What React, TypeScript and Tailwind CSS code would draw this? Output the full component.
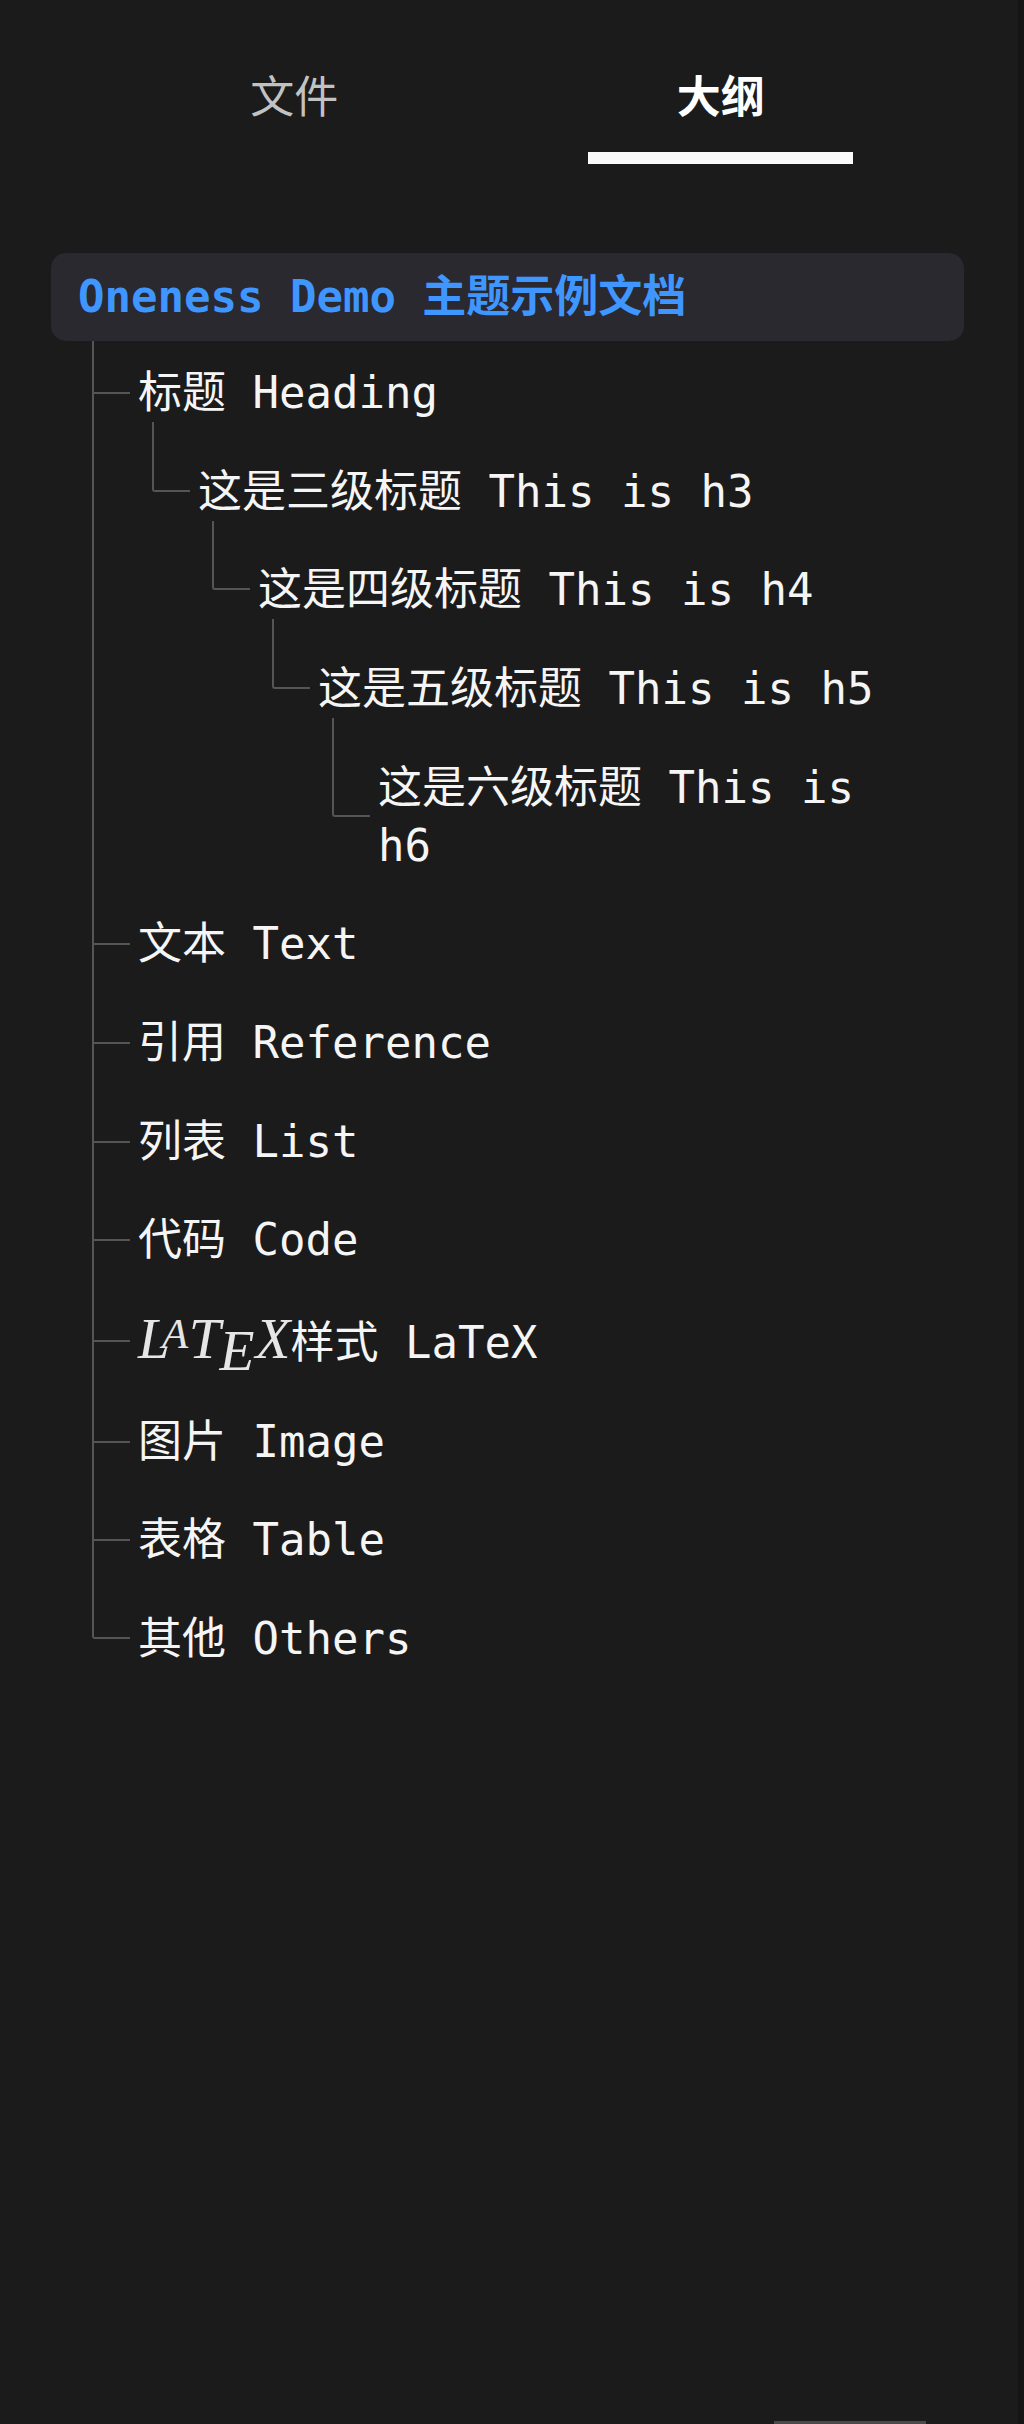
import type { ReactNode } from 'react'
import { twJoin } from 'tailwind-merge'

type OutlineNode = { label: ReactNode; children?: OutlineNode[] }

const LatexLogo = () => (
  <span className="inline-block font-['Liberation_Serif',serif] text-[1.3em] leading-none italic text-[#e6e6e6]">
    L
    <span className="relative -top-[0.22em] -ml-[0.18em] text-[0.75em]">A</span>
    <span className="ml-[0.01em]">T</span>
    <span className="relative top-[0.22em] -ml-[0.02em]">E</span>
    <span className="ml-[0.02em]">X</span>
  </span>
)

const outline: OutlineNode[] = [
  {
    label: '标题 Heading',
    children: [
      {
        label: '这是三级标题 This is h3',
        children: [
          {
            label: '这是四级标题 This is h4',
            children: [
              {
                label: '这是五级标题 This is h5',
                children: [{ label: '这是六级标题 This is h6' }],
              },
            ],
          },
        ],
      },
    ],
  },
  { label: '文本 Text' },
  { label: '引用 Reference' },
  { label: '列表 List' },
  { label: '代码 Code' },
  {
    label: (
      <>
        <LatexLogo />
        样式 LaTeX
      </>
    ),
  },
  { label: '图片 Image' },
  { label: '表格 Table' },
  { label: '其他 Others' },
]

const OutlineItem = ({
  node,
  last,
  tight,
}: {
  node: OutlineNode
  last: boolean
  tight: boolean
}) => {
  return (
    <li className={twJoin('relative', tight ? 'pt-[23px]' : 'pt-[40.67px]')}>
      {!last && <span className="absolute top-0 bottom-0 left-[-46px] w-[2px] bg-[#555555]" />}
      <div className="relative leading-[58px]">
        {last ? (
          <span
            className={twJoin(
              'absolute bottom-1/2 left-[-46px] w-[38px] rounded-bl-[3px] border-b-2 border-l-2 border-[#555555]',
              tight ? 'top-[-23px]' : 'top-[-40.67px]',
            )}
          />
        ) : (
          <span className="absolute top-1/2 left-[-44px] h-[2px] w-[36px] -translate-y-1/2 bg-[#555555]" />
        )}
        {node.label}
      </div>
      {node.children && (
        <ul className="ml-[14px] pl-[46px]">
          {node.children.map((child, i) => (
            <OutlineItem
              key={i}
              node={child}
              last={i === node.children!.length - 1}
              tight={false}
            />
          ))}
        </ul>
      )}
    </li>
  )
}

export default function App() {
  return (
    <div className="flex h-[2424px] w-full bg-[#1b1b1b] font-['DejaVu_Sans_Mono','Noto_Sans_CJK_SC',monospace] text-[44px]">
      <div className="flex min-w-0 flex-1 flex-col">
        {/* tabs */}
        <div className="mt-[69px] ml-[81px] grid w-[853px] grid-cols-2">
          <button className="flex flex-col items-center">
            <span className="leading-[58px] text-[#c2c2c2]">文件</span>
            <span className="mt-[25px] h-[12px] w-[265px]" />
          </button>
          <button className="flex flex-col items-center">
            <span className="leading-[58px] font-bold text-white">大纲</span>
            <span className="mt-[25px] h-[12px] w-[265px] bg-[#fafafa]" />
          </button>
        </div>

        {/* outline */}
        <section className="mt-[89px] ml-[51px] w-[913px]">
          <div className="rounded-[15px] bg-[#29292f] px-[27px] py-[15px] leading-[58px] font-bold text-[#4096ff]">
            Oneness Demo 主题示例文档
          </div>
          <ul className="mr-[63px] ml-[41px] pl-[46px] text-[#f5f5f5]">
            {outline.map((node, i) => (
              <OutlineItem key={i} node={node} last={i === outline.length - 1} tight={i === 0} />
            ))}
          </ul>
        </section>

        <div className="flex-1" />
        <div className="h-[3px]">
          <div className="ml-[774px] h-full w-[152px] bg-[#4a4a4a]" />
        </div>
      </div>
      <div className="w-[6px] bg-[#151515]" />
    </div>
  )
}
